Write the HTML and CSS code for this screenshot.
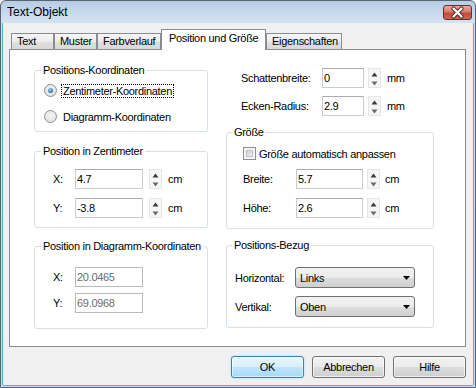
FILE: index.html
```html
<!DOCTYPE html>
<html lang="de">
<head>
  <meta charset="UTF-8" />
  <title>Text-Objekt</title>
  <link rel="stylesheet" href="styles.css">
</head>
<body>
  <div class="window">
    <div class="titlebar">
      <span class="title">Text-Objekt</span>
      <div class="close-btn">
        <svg width="27" height="13" viewBox="0 0 27 13">
          <path d="M9.5 2.5 L17.5 10.5 M17.5 2.5 L9.5 10.5" stroke="#4a2622" stroke-width="4.2" stroke-linecap="round"/>
          <path d="M9.5 2.5 L17.5 10.5 M17.5 2.5 L9.5 10.5" stroke="#fff" stroke-width="2.4" stroke-linecap="round"/>
        </svg>
      </div>
    </div>

    <div class="client">
      <div class="tabs">
        <div class="tab tab-text">Text</div>
        <div class="tab tab-muster">Muster</div>
        <div class="tab tab-verlauf">Farbverlauf</div>
        <div class="tab tab-position active">Position und Größe</div>
        <div class="tab tab-eigen">Eigenschaften</div>
      </div>

      <div class="panel">
        <!-- left column -->
        <div class="col col-left">
          <div class="group group-koord">
            <span class="legend">Positions-Koordinaten</span>
            <div class="radio-row">
              <span class="radio checked"></span>
              <span class="radio-label focus">Zentimeter-Koordinaten</span>
            </div>
            <div class="radio-row">
              <span class="radio"></span>
              <span class="radio-label">Diagramm-Koordinaten</span>
            </div>
          </div>

          <div class="group group-cm">
            <span class="legend">Position in Zentimeter</span>
            <div class="field-row">
              <span class="lbl lbl-xy">X:</span>
              <input class="input input-xy" type="text" value="4.7">
              <svg class="spin" width="13" height="20" viewBox="0 0 13 20"><rect x="0.5" y="0.5" width="12" height="19" fill="#f6f6f6" stroke="#e6e6e6"/><path d="M3.5 8.5h6L6.5 4.5z" fill="#3a3a3a"/><path d="M3.5 13.5h6L6.5 17.5z" fill="#6a6a6a"/></svg>
              <span class="unit">cm</span>
            </div>
            <div class="field-row">
              <span class="lbl lbl-xy">Y:</span>
              <input class="input input-xy" type="text" value="-3.8">
              <svg class="spin" width="13" height="20" viewBox="0 0 13 20"><rect x="0.5" y="0.5" width="12" height="19" fill="#f6f6f6" stroke="#e6e6e6"/><path d="M3.5 8.5h6L6.5 4.5z" fill="#3a3a3a"/><path d="M3.5 13.5h6L6.5 17.5z" fill="#6a6a6a"/></svg>
              <span class="unit">cm</span>
            </div>
          </div>

          <div class="group group-diag">
            <span class="legend">Position in Diagramm-Koordinaten</span>
            <div class="field-row">
              <span class="lbl lbl-xy">X:</span>
              <input class="input input-xy" type="text" value="20.0465" disabled>
            </div>
            <div class="field-row">
              <span class="lbl lbl-xy">Y:</span>
              <input class="input input-xy" type="text" value="69.0968" disabled>
            </div>
          </div>
        </div>

        <!-- right column -->
        <div class="col col-right">
          <div class="opt-row">
            <span class="lbl lbl-opt">Schattenbreite:</span>
            <input class="input input-opt" type="text" value="0">
            <svg class="spin spin-opt" width="13" height="20" viewBox="0 0 13 20"><rect x="0.5" y="0.5" width="12" height="19" fill="#f6f6f6" stroke="#e6e6e6"/><path d="M3.5 8.5h6L6.5 4.5z" fill="#3a3a3a"/><path d="M3.5 13.5h6L6.5 17.5z" fill="#6a6a6a"/></svg>
            <span class="unit">mm</span>
          </div>
          <div class="opt-row">
            <span class="lbl lbl-opt">Ecken-Radius:</span>
            <input class="input input-opt" type="text" value="2.9">
            <svg class="spin spin-opt" width="13" height="20" viewBox="0 0 13 20"><rect x="0.5" y="0.5" width="12" height="19" fill="#f6f6f6" stroke="#e6e6e6"/><path d="M3.5 8.5h6L6.5 4.5z" fill="#3a3a3a"/><path d="M3.5 13.5h6L6.5 17.5z" fill="#6a6a6a"/></svg>
            <span class="unit">mm</span>
          </div>

          <div class="group group-size">
            <span class="legend legend-right">Größe</span>
            <div class="check-row">
              <span class="checkbox"></span>
              <span class="check-label">Größe automatisch anpassen</span>
            </div>
            <div class="field-row">
              <span class="lbl lbl-size">Breite:</span>
              <input class="input input-size" type="text" value="5.7">
              <svg class="spin spin-opt" width="13" height="20" viewBox="0 0 13 20"><rect x="0.5" y="0.5" width="12" height="19" fill="#f6f6f6" stroke="#e6e6e6"/><path d="M3.5 8.5h6L6.5 4.5z" fill="#3a3a3a"/><path d="M3.5 13.5h6L6.5 17.5z" fill="#6a6a6a"/></svg>
              <span class="unit unit-size">cm</span>
            </div>
            <div class="field-row">
              <span class="lbl lbl-size">Höhe:</span>
              <input class="input input-size" type="text" value="2.6">
              <svg class="spin spin-opt" width="13" height="20" viewBox="0 0 13 20"><rect x="0.5" y="0.5" width="12" height="19" fill="#f6f6f6" stroke="#e6e6e6"/><path d="M3.5 8.5h6L6.5 4.5z" fill="#3a3a3a"/><path d="M3.5 13.5h6L6.5 17.5z" fill="#6a6a6a"/></svg>
              <span class="unit unit-size">cm</span>
            </div>
          </div>

          <div class="group group-ref">
            <span class="legend legend-right">Positions-Bezug</span>
            <div class="combo-row">
              <span class="lbl lbl-ref">Horizontal:</span>
              <div class="combo">
                <span>Links</span>
                <svg width="7" height="4" viewBox="0 0 7 4"><path d="M0 0h7L3.5 4z" fill="#000"/></svg>
              </div>
            </div>
            <div class="combo-row">
              <span class="lbl lbl-ref">Vertikal:</span>
              <div class="combo">
                <span>Oben</span>
                <svg width="7" height="4" viewBox="0 0 7 4"><path d="M0 0h7L3.5 4z" fill="#000"/></svg>
              </div>
            </div>
          </div>
        </div>
      </div>

      <div class="buttons">
        <button class="btn btn-default">OK</button>
        <button class="btn">Abbrechen</button>
        <button class="btn">Hilfe</button>
      </div>
    </div>
  </div>
</body>
</html>
```

FILE: styles.css
```css
* {
  box-sizing: border-box;
}

body {
  margin: 0;
  font-family: "Liberation Sans", Arial, sans-serif;
  font-size: 11px;
  letter-spacing: -0.3px;
  color: #000;
  background: #fff;
}

.window {
  width: 476px;
  height: 388px;
  border: 1px solid #59636e;
  border-radius: 6px 6px 0 0;
  background: linear-gradient(#b7cde6, #d4e3f2 22px, #c8dbef);
  padding: 0 2px 2px;
  display: flex;
  flex-direction: column;
}

.titlebar {
  height: 22px;
  display: flex;
  justify-content: space-between;
  align-items: flex-start;
  padding-left: 4px;
}

.title {
  font-size: 12px;
  letter-spacing: 0;
  line-height: 14px;
  margin-top: 4px;
}

.close-btn {
  width: 29px;
  height: 15px;
  margin: 4px 1px 0 0;
  border: 1px solid #6a2e27;
  border-radius: 3px;
  background: linear-gradient(#e9a99b, #d77a6a 45%, #c44b3a 55%, #cf6552);
  display: flex;
}

.client {
  flex: 1;
  background: #f0f0f0;
  box-shadow: -1px 0 #62a8da, 1px 0 #62a8da, 0 1px #62a8da;
  padding: 6px 7px 0 6px;
}

/* tabs */
.tabs {
  display: flex;
  align-items: flex-end;
  height: 20px;
  margin-left: 2px;
  position: relative;
  z-index: 1;
}

.tab {
  height: 16px;
  border: 1px solid #898c95;
  border-bottom: none;
  background: linear-gradient(#f6f6f6, #ececec 50%, #e0e0e0 51%, #d8d8d8);
  padding-left: 5px;
  line-height: 15px;
  white-space: nowrap;
}

.tab-text { width: 43px; }
.tab-muster { width: 43px; }
.tab-verlauf { width: 64px; }
.tab-position { width: 105px; }
.tab-eigen { width: 76px; }

.tab.active {
  height: 21px;
  margin-bottom: -1px;
  background: #fff;
  padding-left: 7px;
  line-height: 16px;
}

.panel {
  width: 457px;
  height: 298px;
  border: 1px solid #898c95;
  background: #fff;
  display: flex;
  gap: 18px;
  padding-left: 24px;
}

.col {
  display: flex;
  flex-direction: column;
}

.col-left { width: 174px; }
.col-right { width: 208px; }

/* group boxes */
.group {
  position: relative;
  border: 1px solid #d5dfe5;
  border-radius: 3px;
}

.legend {
  position: absolute;
  top: -7px;
  left: 6px;
  padding: 0 2px;
  background: #fff;
  line-height: 13px;
  white-space: nowrap;
}

.legend-right {
  left: 5px;
}

.group-koord {
  margin-top: 20px;
  height: 62px;
  padding: 13px 0 0 9px;
}

.group-cm {
  margin-top: 19px;
  height: 77px;
  padding: 17px 0 0 18px;
}

.group-diag {
  margin-top: 18px;
  height: 83px;
  padding: 20px 0 0 18px;
}

.group-size {
  margin-top: 16px;
  height: 97px;
  padding: 14px 0 0 16px;
}

.group-ref {
  margin-top: 16px;
  height: 83px;
  padding: 21px 0 0 8px;
}

/* radios */
.radio-row {
  display: flex;
  align-items: center;
  height: 13px;
}

.radio-row + .radio-row {
  margin-top: 13px;
}

.radio {
  width: 13px;
  height: 13px;
  border-radius: 50%;
  border: 1px solid #8e8f8f;
  background: radial-gradient(circle at 50% 40%, #f4f4f4, #dcdcdc);
  display: flex;
  align-items: center;
  justify-content: center;
}

.radio.checked::after {
  content: "";
  width: 5px;
  height: 5px;
  border-radius: 50%;
  background: radial-gradient(circle at 40% 35%, #9fd3f7, #2b6fb2 70%, #174a80);
}

.radio-label {
  margin-left: 5px;
  padding: 0 1px;
  line-height: 12px;
  white-space: nowrap;
}

.focus {
  outline: 1px dotted #000;
}

/* fields */
.field-row,
.opt-row {
  display: flex;
  align-items: center;
  height: 20px;
}

.group-cm .field-row + .field-row,
.group-size .field-row + .field-row {
  margin-top: 9px;
}

.group-diag .field-row + .field-row {
  margin-top: 6px;
}

.opt-row {
  padding-left: 15px;
  margin-top: 8px;
}

.opt-row:first-child {
  margin-top: 18px;
}

.lbl {
  white-space: nowrap;
}

.lbl-xy { width: 22px; }
.lbl-opt { width: 81px; }
.lbl-size { width: 53px; }
.lbl-ref { width: 60px; }

.input {
  height: 20px;
  font: inherit;
  letter-spacing: inherit;
  color: #000;
  background: #fff;
  border: 1px solid #c9ccd2;
  border-top-color: #abadb3;
  padding: 0 1px;
  margin: 0;
  outline: none;
}

.input:disabled {
  color: #6d6d6d;
  border-color: #b9b9b9;
  background: #fff;
}

.input-xy { width: 68px; }
.input-opt { width: 42px; }
.input-size { width: 67px; }

.spin {
  margin-left: 6px;
  flex-shrink: 0;
}

.spin-opt {
  margin-left: 4px;
}

.unit {
  margin-left: 6px;
}

.unit-size {
  margin-left: 5px;
}

/* checkbox */
.check-row {
  display: flex;
  align-items: center;
  height: 13px;
  margin-bottom: 9px;
}

.checkbox {
  width: 13px;
  height: 13px;
  border: 1px solid #8e8f8f;
  background: #f4f4f4;
  padding: 2px;
  display: flex;
}

.checkbox::after {
  content: "";
  flex: 1;
  border: 1px solid #bfc3c8;
  background: linear-gradient(135deg, #cbcfd5, #f2f2f2);
}

.check-label {
  margin-left: 3px;
  white-space: nowrap;
}

/* combos */
.combo-row {
  display: flex;
  align-items: center;
  height: 21px;
}

.combo-row + .combo-row {
  margin-top: 8px;
}

.combo {
  width: 120px;
  height: 21px;
  border: 1px solid #707070;
  border-radius: 3px;
  background: linear-gradient(#f2f2f2, #ebebeb 50%, #dddddd 51%, #cfcfcf);
  display: flex;
  align-items: center;
  justify-content: space-between;
  padding: 0 4px 0 4px;
}

/* buttons */
.buttons {
  display: flex;
  justify-content: flex-end;
  gap: 8px;
  margin-top: 9px;
}

.btn {
  width: 73px;
  height: 22px;
  font: inherit;
  letter-spacing: inherit;
  color: #000;
  border: 1px solid #707070;
  border-radius: 3px;
  background: linear-gradient(#f2f2f2, #ebebeb 50%, #dddddd 51%, #cfcfcf);
  box-shadow: inset 0 0 0 1px rgba(255, 255, 255, 0.7);
  padding: 0;
}

.btn-default {
  border-color: #3c7fb1;
  background: linear-gradient(#eaf6fd, #d9f0fc 50%, #bee6fd 51%, #a7d9f5);
  box-shadow: inset 0 0 0 1px rgba(255, 255, 255, 0.6), 0 0 2px #8fd0f5;
}
```
